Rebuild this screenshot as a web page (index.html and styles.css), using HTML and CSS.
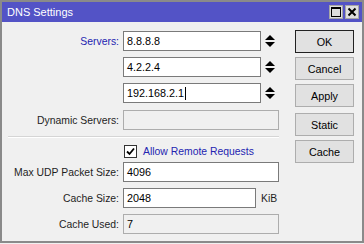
FILE: index.html
```html
<!DOCTYPE html>
<html lang="en">
<head>
  <meta charset="UTF-8">
  <title>DNS Settings</title>
  <link rel="stylesheet" href="styles.css">
</head>
<body>
  <div class="window">
    <div class="titlebar">
      <span class="title">DNS Settings</span>
      <div class="title-btns">
        <span class="tbtn">
          <svg width="10" height="10" viewBox="0 0 10 10"><rect x="0.5" y="0.5" width="9" height="9" fill="none" stroke="#000"/><rect x="0" y="0" width="10" height="2" fill="#000"/></svg>
        </span>
        <span class="tbtn">
          <svg width="10" height="10" viewBox="0 0 10 10"><path d="M1.5 1.5 L8.5 8.5 M8.5 1.5 L1.5 8.5" stroke="#000" stroke-width="2"/></svg>
        </span>
      </div>
    </div>

    <div class="content">
      <div class="form">
        <div class="row">
          <span class="label label-blue">Servers:</span>
          <span class="field field-server">8.8.8.8</span>
          <svg class="spin" width="10" height="12" viewBox="0 0 10 12"><polygon points="0,5 10,5 5,0"/><polygon points="0,7 10,7 5,12"/></svg>
        </div>
        <div class="row">
          <span class="label"></span>
          <span class="field field-server">4.2.2.4</span>
          <svg class="spin" width="10" height="12" viewBox="0 0 10 12"><polygon points="0,5 10,5 5,0"/><polygon points="0,7 10,7 5,12"/></svg>
        </div>
        <div class="row">
          <span class="label"></span>
          <span class="field field-server">192.168.2.1<span class="caret"></span></span>
          <svg class="spin" width="10" height="12" viewBox="0 0 10 12"><polygon points="0,5 10,5 5,0"/><polygon points="0,7 10,7 5,12"/></svg>
        </div>
        <div class="row row-dynamic">
          <span class="label">Dynamic Servers:</span>
          <span class="field field-wide field-off"></span>
        </div>

        <div class="sep"></div>

        <div class="row row-check">
          <span class="label"></span>
          <span class="checkbox">
            <svg width="11" height="11" viewBox="0 0 11 11"><path d="M2 5.5 L4.5 8 L9 2.5" fill="none" stroke="#000" stroke-width="1.8"/></svg>
          </span>
          <span class="label-blue">Allow Remote Requests</span>
        </div>
        <div class="row row-udp">
          <span class="label">Max UDP Packet Size:</span>
          <span class="field field-wide">4096</span>
        </div>
        <div class="row">
          <span class="label">Cache Size:</span>
          <span class="field field-size">2048</span>
          <span class="unit">KiB</span>
        </div>
        <div class="row">
          <span class="label">Cache Used:</span>
          <span class="field field-wide field-off">7</span>
        </div>
      </div>

      <div class="buttons">
        <button class="btn btn-default">OK</button>
        <button class="btn">Cancel</button>
        <button class="btn">Apply</button>
        <button class="btn btn-gap">Static</button>
        <button class="btn">Cache</button>
      </div>
    </div>
  </div>
</body>
</html>
```

FILE: styles.css
```css
* {
  margin: 0;
  padding: 0;
  box-sizing: border-box;
}
body {
  font-family: "Liberation Sans", Arial, sans-serif;
  font-size: 10.4px;
  color: #1e1e1e;
  background: #f0f0f0;
  white-space: nowrap;
}
.window {
  width: 364px;
  height: 243px;
  border: 2px solid #8a8a8a;
  background: #f0f0f0;
  display: flex;
  flex-direction: column;
}
.titlebar {
  height: 20px;
  background: #5353c6;
  display: flex;
  align-items: center;
  padding: 0 3px 0 5px;
}
.title {
  color: #fff;
  font-size: 11px;
}
.title-btns {
  margin-left: auto;
  display: flex;
  gap: 2px;
}
.tbtn {
  width: 14px;
  height: 14px;
  background: #dedede;
  border: 1px solid #a5a5a5;
  display: flex;
  align-items: center;
  justify-content: center;
}
.content {
  display: flex;
  padding: 8px 8px 0 6px;
}
.form {
  width: 271px;
  margin-top: 1px;
  display: flex;
  flex-direction: column;
}
.row {
  height: 20px;
  display: flex;
  align-items: center;
  gap: 4px;
  margin-top: 6px;
}
.row:first-child {
  margin-top: 0;
}
.row-dynamic {
  margin-top: 7px;
}
.row-check {
  margin-top: 3px;
  gap: 0;
}
.row-udp {
  margin-top: 1px;
}
.label {
  width: 111px;
  flex: none;
  text-align: right;
}
.label-blue {
  color: #2424b0;
}
.field {
  height: 20px;
  background: #fff;
  border: 1px solid #7a7a7a;
  padding: 0 3px;
  display: flex;
  align-items: center;
  color: #000;
  font-size: 10.8px;
}
.field-server {
  width: 138px;
}
.field-wide {
  width: 156px;
}
.field-size {
  width: 133px;
}
.field-off {
  background: #f0f0f0;
  border-color: #adadad;
}
.caret {
  width: 1px;
  height: 13px;
  background: #000;
  margin-left: 1px;
}
.spin {
  fill: #000;
}
.unit {
  margin-left: 1px;
}
.sep {
  margin: 6px 0 0 0;
  border-top: 1px solid #d5d5d5;
  border-bottom: 1px solid #fff;
}
.checkbox {
  width: 13px;
  height: 13px;
  margin-left: 5px;
  margin-right: 6px;
  background: #fff;
  border: 1px solid #333;
  display: flex;
  align-items: center;
  justify-content: center;
}
.buttons {
  margin-left: auto;
  display: flex;
  flex-direction: column;
  gap: 4px;
}
.btn {
  width: 59px;
  height: 23px;
  font-family: inherit;
  font-size: 10.8px;
  color: #000;
  background: #e1e1e1;
  border: 1px solid #adadad;
}
.btn-default {
  border-color: #222;
}
.btn-gap {
  margin-top: 2px;
}
```
